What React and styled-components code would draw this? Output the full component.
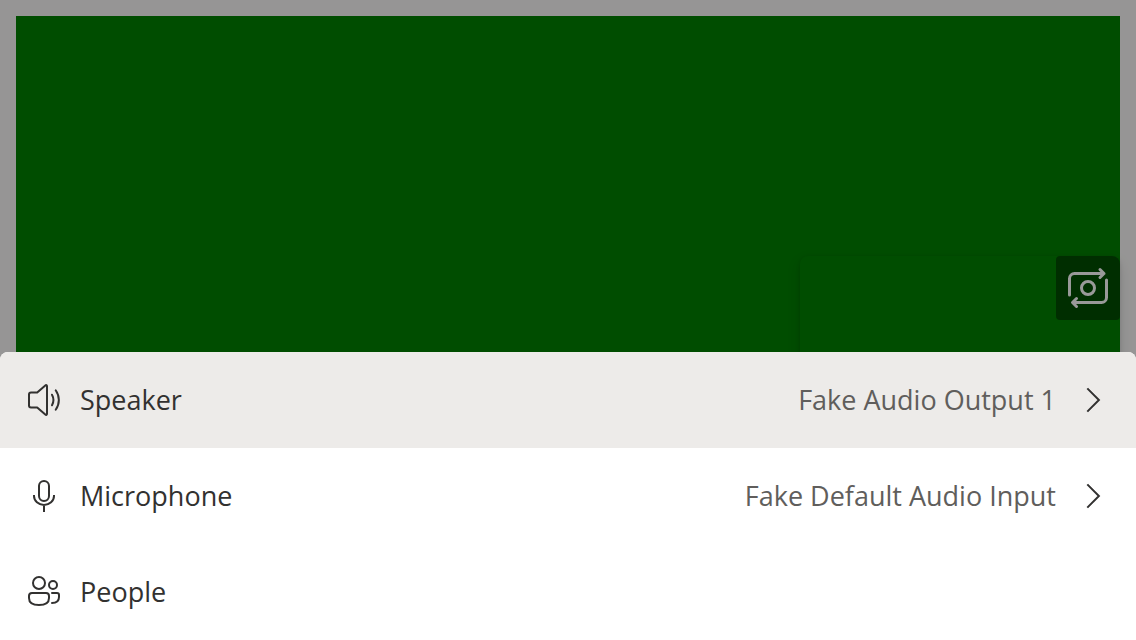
import React from "react";
import styled, { createGlobalStyle } from "styled-components";

const GlobalStyle = createGlobalStyle`
  *, *::before, *::after { box-sizing: border-box; }
  body {
    margin: 0;
    background: #faf9f8;
    font-family: "Segoe UI", "Open Sans", "Noto Sans", sans-serif;
  }
`;

const CallScreen = styled.main`
  position: relative;
  display: flex;
  min-height: 100vh;
  padding: 16px;
  overflow: hidden;
`;

const RemoteVideo = styled.section`
  position: relative;
  flex: 1;
  background: #008000;
`;

const LocalPreview = styled.div`
  position: absolute;
  right: 0;
  bottom: 0;
  display: flex;
  justify-content: flex-end;
  align-items: flex-start;
  width: 320px;
  height: 368px;
  border-radius: 8px;
  background: #008000;
  box-shadow: 0 6px 14px rgba(0, 0, 0, 0.13), 0 1px 4px rgba(0, 0, 0, 0.11);
  overflow: hidden;
`;

const SwitchCameraButton = styled.button`
  display: flex;
  align-items: center;
  justify-content: center;
  width: 64px;
  height: 64px;
  padding: 0;
  border: 0;
  border-radius: 4px;
  background: rgba(0, 0, 0, 0.4);
  color: #fff;
`;

const Backdrop = styled.div`
  position: fixed;
  inset: 0;
  background: rgba(0, 0, 0, 0.4);
`;

const Sheet = styled.div`
  position: fixed;
  left: 0;
  right: 0;
  bottom: 0;
  display: flex;
  flex-direction: column;
  border-radius: 8px 8px 0 0;
  background: #fff;
  overflow: hidden;
`;

const SheetItem = styled.button`
  display: flex;
  align-items: center;
  height: 96px;
  padding: 0 24px;
  border: 0;
  background: ${({ $active }) => ($active ? "#edebe9" : "#fff")};
  color: #323130;
  font: inherit;
  font-size: 27px;
  line-height: 40px;
  text-align: left;
  outline: none;
`;

const ItemLabel = styled.span`
  flex: 1;
  margin-left: 16px;
`;

const ItemValue = styled.span`
  margin-right: 16px;
  color: #605e5c;
`;

const Icon = styled.svg`
  flex: none;
  width: 40px;
  height: 40px;
  fill: none;
  stroke: currentColor;
  stroke-width: 2;
`;

const SpeakerIcon = () => (
  <Icon viewBox="0 0 40 40" aria-hidden="true">
    <path strokeLinejoin="round" d="M23 6.2v27.6c0 1-.9 1.500-1.700.8L13.200 27.500H7a2 2 0 0 1-2-2v-11a2 2 0 0 1 2-2h6.200L21.300 5.400c.8-.7 1.700-.2 1.700.8Z" />
    <path strokeLinecap="round" d="M28 14.700c1.800 3.300 1.800 7.300 0 10.600M31.700 10.200c4.200 6 4.200 13.600 0 19.600" />
  </Icon>
);

const MicrophoneIcon = () => (
  <Icon viewBox="0 0 40 40" aria-hidden="true">
    <rect x="15" y="5" width="10" height="20" rx="5" />
    <path d="M10 19v1a10 9 0 0 0 20 0v-1M20 29v7" />
  </Icon>
);

const PeopleIcon = () => (
  <Icon viewBox="0 0 40 40" aria-hidden="true">
    <circle cx="15" cy="11" r="6" />
    <circle cx="29" cy="13" r="4" />
    <path d="M8 21h14a3 3 0 0 1 3 3v2c0 4.500-4 7-10 7S5 30.500 5 26v-2a3 3 0 0 1 3-3Z" />
    <path strokeLinecap="round" d="M28 21h5a2 2 0 0 1 2 2v2c0 4.500-3 6-7 6" />
  </Icon>
);

const ChevronIcon = () => (
  <Icon viewBox="0 0 40 40" aria-hidden="true">
    <path d="M15.300 8.400 26.900 20 15.300 31.600" />
  </Icon>
);

const SwitchCameraIcon = () => (
  <svg width="48" height="48" viewBox="0 0 48 48" fill="none" stroke="currentColor" strokeWidth="3" strokeLinecap="round" strokeLinejoin="round" aria-hidden="true">
    <circle cx="24" cy="24" r="6.500" />
    <path d="M5.500 31V14.500a5 5 0 0 1 5-5H40M36 5.500 40 9.500 36 13.500" />
    <path d="M42.500 16v17.500a5 5 0 0 1-5 5H9M12.500 34.500l-4 4 4 4" />
  </svg>
);

const items = [
  { label: "Speaker", value: "Fake Audio Output 1", icon: SpeakerIcon, active: true },
  { label: "Microphone", value: "Fake Default Audio Input", icon: MicrophoneIcon },
  { label: "People", icon: PeopleIcon },
];

export default function App() {
  return (
    <>
      <GlobalStyle />
      <CallScreen>
        <RemoteVideo aria-label="Call video">
          <LocalPreview>
            <SwitchCameraButton type="button" aria-label="Switch camera">
              <SwitchCameraIcon />
            </SwitchCameraButton>
          </LocalPreview>
        </RemoteVideo>
      </CallScreen>
      <Backdrop />
      <Sheet role="menu">
        {items.map(({ label, value, icon: ItemIcon, active }) => (
          <SheetItem key={label} type="button" role="menuitem" $active={active}>
            <ItemIcon />
            <ItemLabel>{label}</ItemLabel>
            {value && (
              <>
                <ItemValue>{value}</ItemValue>
                <ChevronIcon />
              </>
            )}
          </SheetItem>
        ))}
      </Sheet>
    </>
  );
}
